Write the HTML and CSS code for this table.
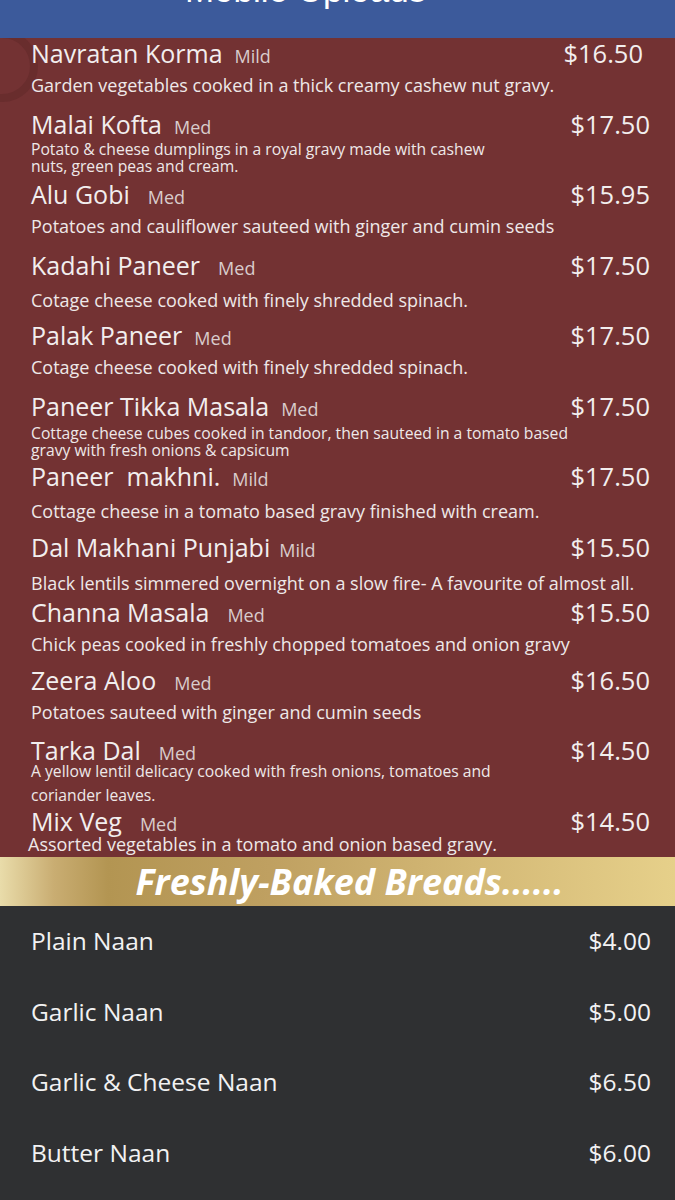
FILE: index.html
```html
<!DOCTYPE html>
<html lang="en">
<head>
<meta charset="utf-8">
<title>Menu</title>
<link rel="stylesheet" href="styles.css">
</head>
<body>
<header class="header"><h1>Mobile Uploads</h1></header>
<section class="menu">
  <div class="ring"></div>
  <div class="item">
    <div class="row"><span class="name">Navratan Korma</span><span class="tag">Mild</span><span class="price first">$16.50</span></div>
    <p class="desc">Garden vegetables cooked in a thick creamy cashew nut gravy.</p>
  </div>
  <div class="item">
    <div class="row"><span class="name">Malai Kofta</span><span class="tag">Med</span><span class="price">$17.50</span></div>
    <p class="desc small">Potato &amp; cheese dumplings in a royal gravy made with cashew<br>nuts, green peas and cream.</p>
  </div>
  <div class="item">
    <div class="row"><span class="name">Alu Gobi</span><span class="tag wide">Med</span><span class="price">$15.95</span></div>
    <p class="desc">Potatoes and cauliflower sauteed with ginger and cumin seeds</p>
  </div>
  <div class="item">
    <div class="row"><span class="name">Kadahi Paneer</span><span class="tag wide">Med</span><span class="price">$17.50</span></div>
    <p class="desc low">Cotage cheese cooked with finely shredded spinach.</p>
  </div>
  <div class="item">
    <div class="row"><span class="name">Palak Paneer</span><span class="tag">Med</span><span class="price">$17.50</span></div>
    <p class="desc">Cotage cheese cooked with finely shredded spinach.</p>
  </div>
  <div class="item">
    <div class="row"><span class="name">Paneer Tikka Masala</span><span class="tag">Med</span><span class="price">$17.50</span></div>
    <p class="desc small lower">Cottage cheese cubes cooked in tandoor, then sauteed in a tomato based<br>gravy with fresh onions &amp; capsicum</p>
  </div>
  <div class="item">
    <div class="row"><span class="name">Paneer&nbsp; makhni.</span><span class="tag">Mild</span><span class="price">$17.50</span></div>
    <p class="desc low">Cottage cheese in a tomato based gravy finished with cream.</p>
  </div>
  <div class="item h65">
    <div class="row"><span class="name">Dal Makhani Punjabi</span><span class="tag narrow">Mild</span><span class="price">$15.50</span></div>
    <p class="desc lowest">Black lentils simmered overnight on a slow fire- A favourite of almost all.</p>
  </div>
  <div class="item h68">
    <div class="row"><span class="name">Channa Masala</span><span class="tag wide">Med</span><span class="price">$15.50</span></div>
    <p class="desc">Chick peas cooked in freshly chopped tomatoes and onion gravy</p>
  </div>
  <div class="item">
    <div class="row"><span class="name">Zeera Aloo</span><span class="tag wide">Med</span><span class="price">$16.50</span></div>
    <p class="desc">Potatoes sauteed with ginger and cumin seeds</p>
  </div>
  <div class="item">
    <div class="row"><span class="name">Tarka Dal</span><span class="tag wide">Med</span><span class="price">$14.50</span></div>
    <p class="desc small loose">A yellow lentil delicacy cooked with fresh onions, tomatoes and<br>coriander leaves.</p>
  </div>
  <div class="item last">
    <div class="row"><span class="name">Mix Veg</span><span class="tag wide">Med</span><span class="price">$14.50</span></div>
    <p class="desc close">Assorted vegetables in a tomato and onion based gravy.</p>
  </div>
</section>
<div class="banner"><h2>Freshly-Baked Breads......</h2></div>
<section class="breads">
  <div class="bread"><span>Plain Naan</span><span>$4.00</span></div>
  <div class="bread"><span>Garlic Naan</span><span>$5.00</span></div>
  <div class="bread"><span>Garlic &amp; Cheese Naan</span><span>$6.50</span></div>
  <div class="bread"><span>Butter Naan</span><span>$6.00</span></div>
</section>
</body>
</html>
```
FILE: styles.css
```css
html, body {
  margin: 0;
  padding: 0;
}
body {
  width: 675px;
  height: 1200px;
  overflow: hidden;
  background: #2f3032;
  font-family: "Open Sans", Lato, sans-serif;
  color: #f2eeee;
}
.header {
  position: relative;
  z-index: 1;
  height: 38px;
  background: #3c5a9b;
  overflow: hidden;
  text-align: center;
}
.header h1 {
  margin: -27px 0 0;
  padding-right: 64px;
  font: 400 35px/34px "Liberation Sans", Arial, sans-serif;
  color: #fff;
}
.menu {
  position: relative;
  background: #733233;
}
.ring {
  position: absolute;
  left: -34px;
  top: -8px;
  width: 56px;
  height: 56px;
  border-radius: 50%;
  border: 8px solid rgba(60, 20, 20, 0.18);
}
.item {
  position: relative;
  height: 70.5px;
  padding: 0 25px 0 31px;
}
.item.h65 { height: 65px; }
.item.h68 { height: 68px; }
.item.last { height: 51px; }
.row {
  display: flex;
  align-items: baseline;
  height: 30px;
  line-height: 30px;
}
.name {
  font-size: 25px;
  white-space: pre;
}
.tag {
  margin-left: 12px;
  font-size: 18px;
  color: #d9cccc;
}
.tag.wide { margin-left: 18px; }
.tag.narrow { margin-left: 9px; }
.price {
  margin-left: auto;
  font-size: 25.5px;
}
.price.first { margin-right: 7px; }
.desc {
  margin: 7px 0 0;
  font-size: 18px;
  line-height: 20px;
  color: #eee8e8;
}
.desc.low { margin-top: 10px; }
.desc.lowest { margin-top: 11px; }
.desc.close { margin-top: -2px; margin-left: -3px; }
.desc.small {
  margin-top: 2px;
  font-size: 15.7px;
  line-height: 17px;
}
.desc.small.lower { margin-top: 4px; }
.desc.small.loose {
  margin-top: -6px;
  line-height: 24px;
}
.banner {
  height: 49px;
  background: linear-gradient(90deg, #e9dcaa 0%, #c9ad72 8%, #b39552 16%, #bfa061 40%, #d4b976 70%, #e6d08a 100%);
  text-align: center;
}
.banner h2 {
  margin: 0;
  padding-left: 24px;
  font: italic 700 36px/49px "Open Sans", sans-serif;
  color: #fff;
}
.bread {
  display: flex;
  justify-content: space-between;
  align-items: center;
  height: 70.5px;
  padding: 0 24px 0 31px;
  font-size: 24.5px;
  color: #f2f2f2;
}
```
